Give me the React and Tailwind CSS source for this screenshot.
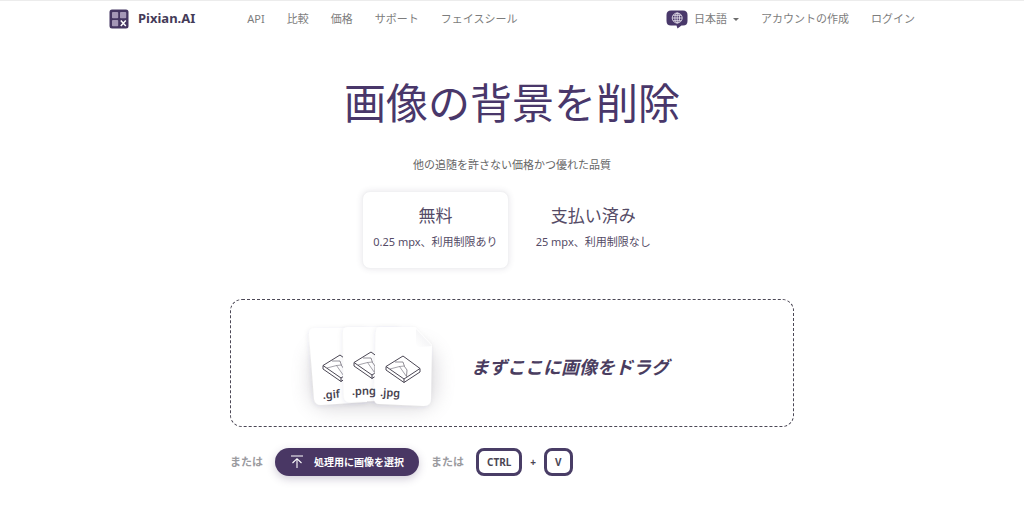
import React from "react";

const navItems = ["API", "比較", "価格", "サポート", "フェイスシール"];

function Logo() {
  return (
    <svg className="size-5" viewBox="0 0 20 20" aria-hidden="true">
      <rect x="0.5" y="0.5" width="19" height="19" rx="2.5" fill="#453662" />
      <rect x="3" y="3" width="6.2" height="6.2" rx="0.8" fill="#a497b6" />
      <rect x="11" y="3" width="6.2" height="6.2" rx="0.8" fill="#a497b6" />
      <rect x="3" y="11" width="6.2" height="6.2" rx="0.8" fill="#a497b6" />
      <path d="M11.8 11.4l5 5.6M16.8 11.4l-5 5.6" stroke="#fff" strokeWidth="1.5" />
    </svg>
  );
}

function LanguageBubble() {
  return (
    <svg className="h-5 w-[22px]" viewBox="0 0 22 20" aria-hidden="true">
      <path
        d="M5 1.500h12q4.500 0 4.500 4.500v6q0 4.500-4.500 4.500h-1.500L11.500 19.500l-1-3H5Q0.500 16.500 0.500 12v-6Q0.500 1.500 5 1.500z"
        fill="#49386a"
      />
      <g fill="none" stroke="#eeeaf3" strokeWidth="0.8">
        <circle cx="11.200" cy="9" r="5" />
        <ellipse cx="11.200" cy="9" rx="2.300" ry="5" />
        <path d="M11.200 4v10M6.200 9h10M7.200 6.300h8M7.200 11.700h8" />
      </g>
    </svg>
  );
}

function Tile() {
  return (
    <g fill="none" stroke="#4b4754" strokeWidth="1" strokeLinejoin="round">
      <path d="M0 10.500L17 0l17 12.500L18 23z" />
      <path d="M0 10.500v3.500l18 12.500V23M18 26.500L34 16v-3.500" />
      <path d="M9 6l8 0 1.500 4.500 2.500 3.500-0.500 6.500" strokeWidth="0.600" />
      <path d="M4 13l9.500-2.500 5-0.500M13.500 10.500l7 10" strokeWidth="0.500" />
    </g>
  );
}

function FileArt() {
  return (
    <svg
      className="h-[124px] w-[172px] shrink-0"
      viewBox="0 0 172 124"
      role="img"
      aria-label=".gif .png .jpg"
    >
      <defs>
        <filter id="soft" x="-50%" y="-50%" width="200%" height="200%">
          <feGaussianBlur stdDeviation="10" />
        </filter>
        <filter id="edge" x="-20%" y="-20%" width="140%" height="140%">
          <feDropShadow dx="-1" dy="1" stdDeviation="2.500" floodColor="#3f3950" floodOpacity="0.08" />
        </filter>
        <linearGradient id="fold" x1="0" y1="1" x2="1" y2="0">
          <stop offset="0" stopColor="#fff" />
          <stop offset="1" stopColor="#ececef" />
        </linearGradient>
        <clipPath id="gifClip"><rect width="54" height="124" /></clipPath>
        <clipPath id="pngClip"><rect width="86" height="124" /></clipPath>
      </defs>
      <rect x="22" y="45" width="124" height="62" rx="18" fill="#77717f" opacity="0.280" filter="url(#soft)" />
      <g filter="url(#edge)">
        <path d="M20 33q0-6 6-6h52v74l-46 3q-6 0-7-6z" fill="#fff" />
      </g>
      <g clipPath="url(#gifClip)">
        <g transform="translate(34 54)"><Tile /></g>
      </g>
      <g filter="url(#edge)">
        <path d="M54 31q0-5 5-5h52v73l-50 2q-6 0-6-6z" fill="#fff" />
      </g>
      <g clipPath="url(#pngClip)">
        <g transform="translate(65 51)"><Tile /></g>
      </g>
      <g filter="url(#edge)">
        <path d="M87 31q0-5 5-5h34l17 18-1 54q0 7-7 7l-45-2q-5 0-5-6z" fill="#fff" />
      </g>
      <path d="M127 28l16 17-11 1q-5 0-5-5z" fill="url(#fold)" />
      <g transform="translate(97 55)"><Tile /></g>
      <g className="font-['Noto_Sans'] text-[11px] font-semibold" fill="#47424f">
        <text x="34" y="98" transform="rotate(-5 34 98)">.gif</text>
        <text x="63" y="94" transform="rotate(-1 63 94)">.png</text>
        <text x="91" y="95" transform="rotate(3 91 95)">.jpg</text>
      </g>
    </svg>
  );
}

function Plan({ title, detail, selected }) {
  return (
    <button
      type="button"
      aria-pressed={selected}
      className={
        selected
          ? "flex h-[78px] flex-col items-center rounded-lg border border-[#f1f1f3] bg-white px-[10px] pt-3 shadow-[0_0_6px_rgba(60,50,80,0.12)]"
          : "flex h-[78px] flex-col items-center rounded-lg border border-transparent px-[10px] pt-3"
      }
    >
      <span className="text-[17px] leading-6">{title}</span>
      <span className="mt-1 text-[11px] leading-5 whitespace-nowrap">{detail}</span>
    </button>
  );
}

export default function App() {
  return (
    <div className="min-h-screen border-t border-[#ececec] bg-white font-['Noto_Sans','Noto_Sans_CJK_JP',sans-serif] text-[#554b66]">
      <header className="mx-auto flex h-9 w-full max-w-[806px] items-center text-[11px] text-[#7d7d7d]">
        <a href="#home" className="flex items-center gap-[9px] text-[13px] font-bold text-[#453b58]">
          <Logo />
          Pixian.AI
        </a>
        <nav className="ml-[52px] flex items-center gap-[22px]">
          {navItems.map((item) => (
            <a key={item} href="#nav" className="whitespace-nowrap">{item}</a>
          ))}
        </nav>
        <div className="ml-auto flex items-center gap-[22px] whitespace-nowrap">
          <button type="button" className="flex items-center gap-[6px]">
            <LanguageBubble />
            日本語
            <svg className="h-[3px] w-[6px]" viewBox="0 0 6 3" aria-hidden="true">
              <path d="M0 0h6L3 3z" fill="#6d6d6d" />
            </svg>
          </button>
          <a href="#signup">アカウントの作成</a>
          <a href="#login">ログイン</a>
        </div>
      </header>

      <main className="mx-auto flex w-full max-w-[564px] flex-col">
        <h1 className="mt-8 text-center text-[42px] leading-[68px] text-[#49376a]">
          画像の背景を削除
        </h1>
        <p className="mt-[18px] text-center text-[11px] leading-5 text-[#666]">
          他の追随を許さない価格かつ優れた品質
        </p>

        <div className="mt-4 flex justify-center gap-4">
          <Plan title="無料" detail="0.25 mpx、利用制限あり" selected />
          <Plan title="支払い済み" detail="25 mpx、利用制限なし" selected={false} />
        </div>

        <div className="mt-[30px] flex h-32 items-center gap-[10px] rounded-xl border border-dashed border-[#4b4755] pl-[58px]">
          <FileArt />
          <p className="pt-2 text-[18px] font-bold whitespace-nowrap text-[#4a3d60] italic">
            まずここに画像をドラグ
          </p>
        </div>

        <div className="mt-[21px] flex items-center gap-3 text-[11px] font-bold whitespace-nowrap text-[#9b9b9f]">
          <span>または</span>
          <button
            type="button"
            className="flex h-7 items-center gap-[10px] rounded-full bg-[#493764] px-[15px] text-[10px] text-white shadow-[0_3px_8px_rgba(73,55,100,0.25)]"
          >
            <svg className="size-[14px]" viewBox="0 0 14 14" fill="none" stroke="#fff" strokeWidth="1.1" aria-hidden="true">
              <path d="M1 1h12M7 13V4M2.500 8L7 3.700 11.500 8" />
            </svg>
            処理用に画像を選択
          </button>
          <span>または</span>
          <div className="flex items-center gap-2 text-[10px] text-[#4b4654]">
            <kbd className="flex h-7 items-center rounded-lg border-3 border-[#493d66] px-2 font-['Noto_Sans']">CTRL</kbd>
            <span>+</span>
            <kbd className="flex h-7 items-center rounded-lg border-3 border-[#493d66] px-2 font-['Noto_Sans']">V</kbd>
          </div>
        </div>
      </main>
    </div>
  );
}
